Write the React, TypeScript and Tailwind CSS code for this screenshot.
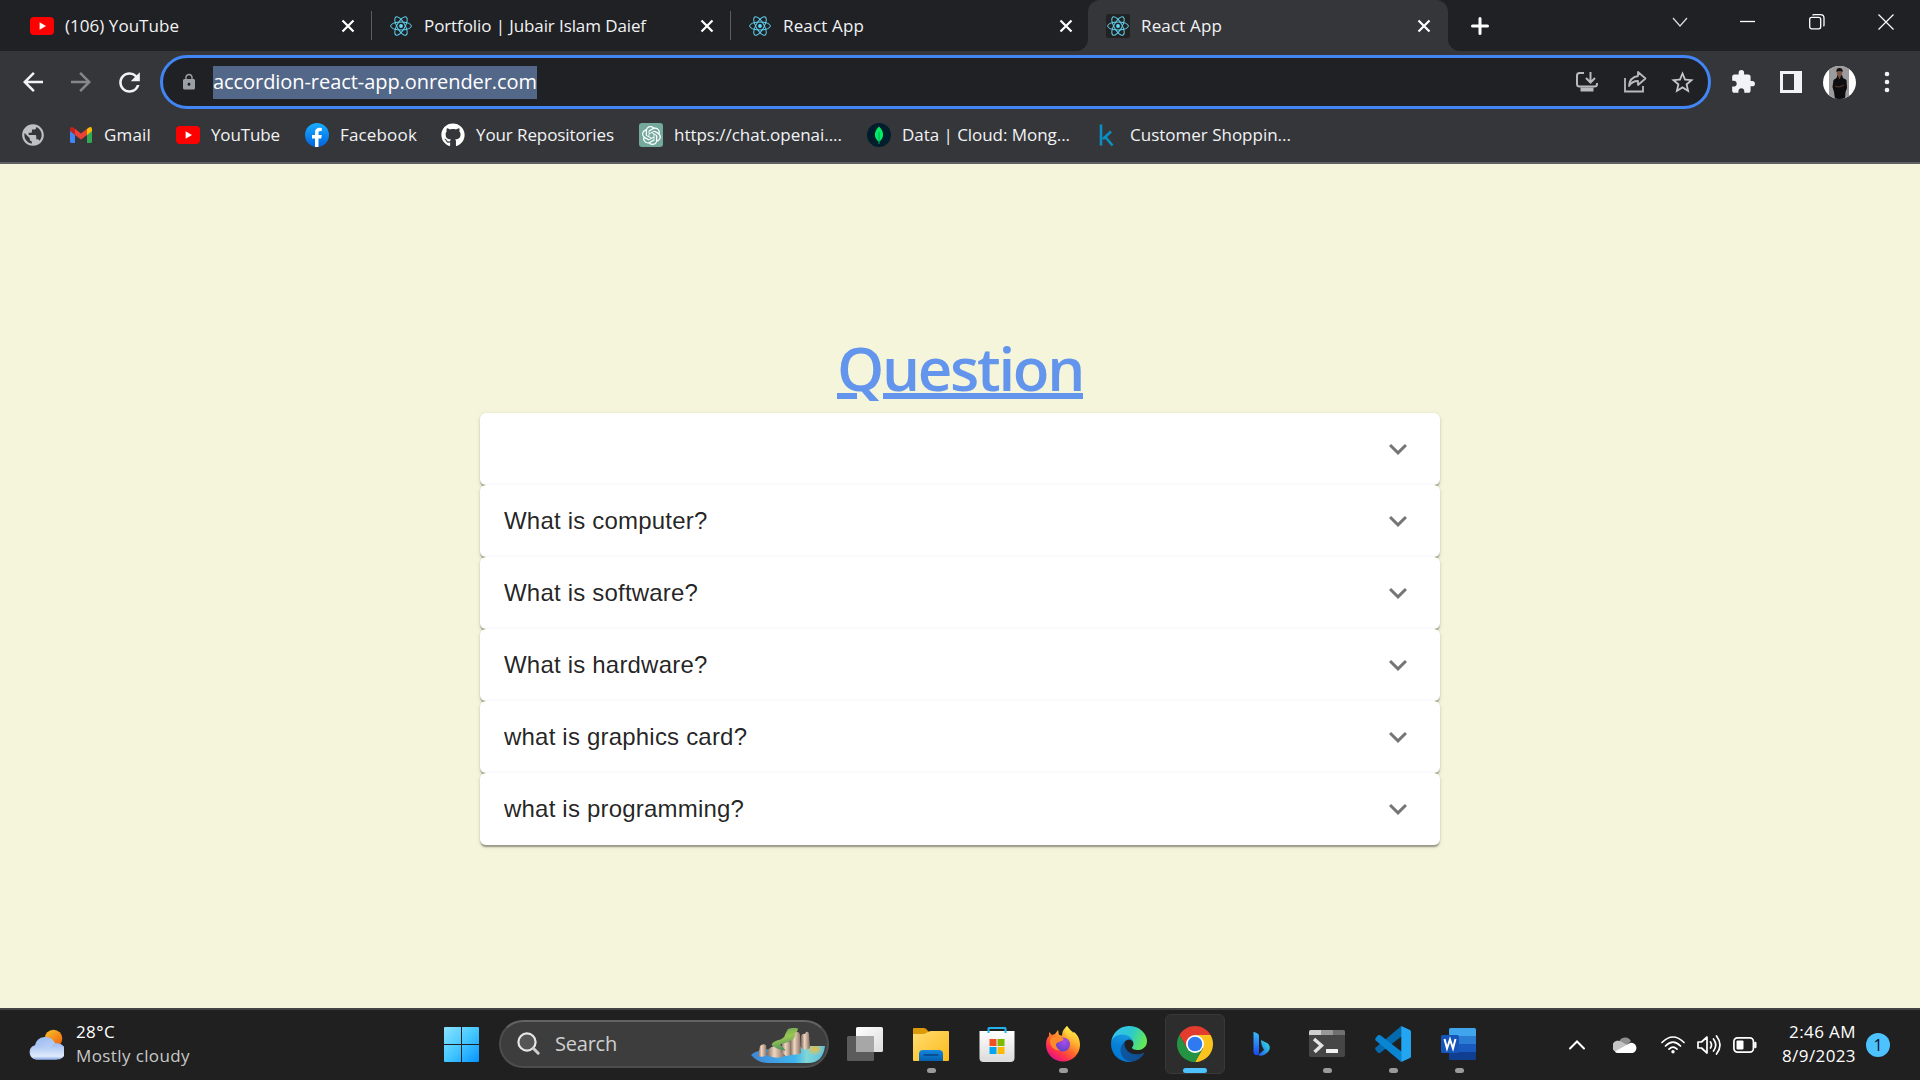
import { useLayoutEffect, useRef, type ReactNode } from "react";
import { FaGithub } from "react-icons/fa";
import { SiOpenai } from "react-icons/si";
import { MdLock, MdArrowBack, MdArrowForward, MdRefresh, MdExtension, MdStarBorder, MdPublic } from "react-icons/md";

/* Single-line label whose letter spacing is tuned so that it fills `w` pixels. */
function Label({ w, className = "", children }: { w: number; className?: string; children: string }) {
  const ref = useRef<HTMLSpanElement>(null);
  useLayoutEffect(() => {
    const el = ref.current;
    if (!el) return;
    el.style.letterSpacing = "0px";
    const natural = el.getBoundingClientRect().width;
    el.style.letterSpacing = `${(w - natural) / children.length}px`;
  }, [w, children]);
  return (
    <span ref={ref} className={`inline-block shrink-0 whitespace-pre ${className}`}>
      {children}
    </span>
  );
}

function YouTubeIcon() {
  return (
    <svg viewBox="0 0 24 18" className="h-[18px] w-6 shrink-0">
      <rect width="24" height="18" rx="4" fill="#f00" />
      <path d="M9.6 5.2v7.6L16 9z" fill="#fff" />
    </svg>
  );
}

function ReactIcon({ plate = false }: { plate?: boolean }) {
  return (
    <svg viewBox="0 0 24 24" className="size-6 shrink-0" fill="none" stroke="#5fd4f3" strokeWidth="1">
      {plate && <rect width="24" height="24" rx="2" fill="#222" stroke="none" />}
      <ellipse cx="12" cy="12" rx="10.4" ry="4" />
      <ellipse cx="12" cy="12" rx="10.4" ry="4" transform="rotate(60 12 12)" />
      <ellipse cx="12" cy="12" rx="10.4" ry="4" transform="rotate(120 12 12)" />
      <circle cx="12" cy="12" r="1.9" fill="#61dafb" stroke="none" />
    </svg>
  );
}

function CloseX() {
  return (
    <svg viewBox="0 0 14 14" className="size-3.5 shrink-0" stroke="#fff" strokeWidth="2.2">
      <path d="M1.5 1.5l11 11M12.5 1.5l-11 11" />
    </svg>
  );
}

function Tab({ title, w, icon, separator = true }: { title: string; w: number; icon: ReactNode; separator?: boolean }) {
  return (
    <div className="flex h-[51px] w-[359px] shrink-0 items-center pl-[17px]">
      {icon}
      <Label w={w} className="ml-[11px] text-[17px] text-[#f1f3f4]">
        {title}
      </Label>
      <span className="ml-auto mr-4 flex">
        <CloseX />
      </span>
      <span className={separator ? "h-[29px] w-px bg-[#5a5c60]" : "h-[29px] w-px"} />
    </div>
  );
}

function TabStrip() {
  return (
    <div className="flex h-[51px] bg-[#202124] pl-[13px]">
      <Tab title="(106) YouTube" w={114} icon={<YouTubeIcon />} />
      <Tab title="Portfolio | Jubair Islam Daief" w={222} icon={<ReactIcon />} />
      <Tab title="React App" w={81} icon={<ReactIcon />} separator={false} />
      <div className="relative -ml-0.5 w-[360px] rounded-t-[12px] bg-[#35363a] pl-px">
        <svg viewBox="0 0 12 12" className="absolute bottom-0 -left-3 size-3" fill="#35363a">
          <path d="M12 0v12H0A12 12 0 0 0 12 0z" />
        </svg>
        <svg viewBox="0 0 12 12" className="absolute bottom-0 -right-3 size-3" fill="#35363a">
          <path d="M0 0v12h12A12 12 0 0 1 0 0z" />
        </svg>
        <Tab title="React App" w={81} icon={<ReactIcon plate />} separator={false} />
      </div>
      <svg viewBox="0 0 18 18" className="mt-[17px] ml-[23px] size-[18px]" stroke="#fff" strokeWidth="3" strokeLinecap="round">
        <path d="M9 1.5v15M1.5 9h15" />
      </svg>
      <div className="ml-auto flex pt-[14px] pr-[26px]">
        <svg viewBox="0 0 16 16" className="mr-[52px] size-4" fill="none" stroke="#ddd" strokeWidth="1.2">
          <path d="M1 4l7 8 7-8" />
        </svg>
        <svg viewBox="0 0 16 16" className="mr-[53px] size-4" stroke="#fff" strokeWidth="1.3">
          <path d="M0 7.5h15" />
        </svg>
        <svg viewBox="0 0 16 16" className="mr-[53px] size-4" fill="none" stroke="#fff" strokeWidth="1.3">
          <rect x=".7" y="3.4" width="11" height="11.4" rx="2" />
          <path d="M3.5 1.2Q4 .7 5 .7h6.500q3.500 0 3.500 3.500V11q0 .8-.5 1.300" />
        </svg>
        <svg viewBox="0 0 16 16" className="size-4" stroke="#fff" strokeWidth="1.2">
          <path d="M.5.5l15 15M15.500.5l-15 15" />
        </svg>
      </div>
    </div>
  );
}

function Avatar() {
  return (
    <svg viewBox="0 0 33 33" className="size-[33px] shrink-0">
      <defs>
        <clipPath id="avatarClip">
          <circle cx="16.5" cy="16.5" r="16.500" />
        </clipPath>
      </defs>
      <g clipPath="url(#avatarClip)">
        <rect width="33" height="33" fill="#fff" />
        <rect x="6" width="20" height="33" fill="#9b9b9d" />
        <path d="M14.500 9h4.500l1 3 3.500 2 .5 8-1.500 4-.5 7H12l-1-7-1.500-5L10.500 14l3-2z" fill="#0d0d10" />
        <ellipse cx="16.500" cy="6.500" rx="2.700" ry="3.800" fill="#7d5648" />
        <path d="M13.400 6Q13 2 16.500 2t3.200 4q-3-2-6.300 0z" fill="#111" />
        <path d="M14.800 10h3.200l-1.500 3.500z" fill="#76503f" />
        <path d="M12 20q4 2 9-1" stroke="#4a332b" strokeWidth="1.200" fill="none" />
      </g>
    </svg>
  );
}

function Toolbar() {
  return (
    <div className="flex h-[62px] items-center bg-[#35363a]">
      <MdArrowBack className="ml-[18px] size-[30px] shrink-0 text-[#f1f3f4]" />
      <MdArrowForward className="ml-[18px] size-[30px] shrink-0 text-[#86878a]" />
      <MdRefresh className="ml-[18px] size-[31px] shrink-0 text-[#f1f3f4]" />
      <div className="ml-[15px] flex h-[54px] w-[1551px] shrink-0 items-center rounded-full border-[3px] border-[#4285f4] bg-[#202124]">
        <MdLock className="ml-[17px] size-[18px] shrink-0 text-[#9aa0a6]" />
        <span className="ml-[15px] flex h-[33px] items-center bg-[#536788]">
          <Label w={324} className="text-[20px] text-white">
            accordion-react-app.onrender.com
          </Label>
        </span>
        <svg viewBox="0 0 22 22" className="ml-auto size-[22px]" fill="none" stroke="#b8babd" strokeWidth="2">
          <path d="M8 2H3.500Q1 2 1 4.500V13q0 2.500 2.500 2.500h15Q21 15.500 21 13v-1" />
          <path d="M14.500 1v9.500M10 7l4.500 4.500L19 7" />
          <path d="M4.500 18.500h13" strokeWidth="4" />
        </svg>
        <svg viewBox="0 0 24 24" className="ml-[25px] size-6" fill="none" stroke="#b8babd" strokeWidth="1.800">
          <path d="M2 8v13.500h18V16" />
          <path d="M15 2l7.500 6.500L15 15v-4q-5.500-.2-9 5Q6.500 7.500 15 6z" strokeLinejoin="round" />
        </svg>
        <MdStarBorder className="mr-3 ml-[22px] size-[27px] text-[#c4c6c9]" />
      </div>
      <MdExtension className="ml-[19px] size-[26px] shrink-0 text-[#f1f3f4]" />
      <svg viewBox="0 0 22 22" className="ml-6 size-[22px] shrink-0">
        <path d="M0 0h22v22H0zM3 3v16h11V3z" fill="#f1f3f4" fillRule="evenodd" />
      </svg>
      <span className="ml-[21px] flex">
        <Avatar />
      </span>
      <svg viewBox="0 0 6 22" className="ml-7 h-[22px] w-1.5 shrink-0" fill="#f1f3f4">
        <circle cx="3" cy="3" r="2.300" />
        <circle cx="3" cy="11" r="2.300" />
        <circle cx="3" cy="19" r="2.300" />
      </svg>
    </div>
  );
}

function Bookmark({ icon, title, w, className }: { icon: ReactNode; title: string; w: number; className: string }) {
  return (
    <div className={`flex items-center ${className}`}>
      {icon}
      <Label w={w} className="ml-[11px] text-[17px] text-[#f1f3f4]">
        {title}
      </Label>
    </div>
  );
}

function BookmarksBar() {
  return (
    <div className="flex h-[51px] items-center border-b-2 border-[#5f6063] bg-[#35363a] pb-[5px] pl-5">
      <MdPublic className="size-[26px] shrink-0 text-[#bdc1c6]" />
      <Bookmark
        className="ml-[23px]"
        w={47}
        title="Gmail"
        icon={
          <svg viewBox="0 0 24 18" className="h-[18px] w-6">
            <path d="M1 3v12.500Q1 17 2.500 17H6V8z" fill="#4285f4" />
            <path d="M23 3v12.500q0 1.500-1.500 1.500H18V8z" fill="#34a853" />
            <path d="M18 3l1.500-1.200Q23-.2 23 3.500V5l-5 4z" fill="#fbbc04" />
            <path d="M6 3L4.500 1.800Q1-.2 1 3.500V5l5 4z" fill="#c5221f" />
            <path d="M6 2.800l6 4.700 6-4.700V9l-6 4.600L6 9z" fill="#ea4335" />
          </svg>
        }
      />
      <Bookmark className="ml-[25px]" w={69} title="YouTube" icon={<YouTubeIcon />} />
      <Bookmark
        className="ml-[25px]"
        w={77}
        title="Facebook"
        icon={
          <svg viewBox="0 0 24 24" className="size-6">
            <defs>
              <linearGradient id="fb" x2="0" y2="1">
                <stop stopColor="#19aeff" />
                <stop offset="1" stopColor="#0163e0" />
              </linearGradient>
            </defs>
            <circle cx="12" cy="12" r="12" fill="url(#fb)" />
            <path d="M10 24v-8.500H7V12h3V9.300C10 6.300 11.800 4.700 14.500 4.700q1.300 0 2.300.2V8h-1.500c-1.500 0-1.800.8-1.800 1.800V12h3.300l-.6 3.500h-2.700V24z" fill="#fff" />
          </svg>
        }
      />
      <Bookmark className="ml-6" w={138} title="Your Repositories" icon={<FaGithub className="size-6 text-white" />} />
      <Bookmark
        className="ml-[25px]"
        w={168}
        title="https://chat.openai...."
        icon={
          <span className="flex size-6 items-center justify-center rounded-[3px] bg-[#74aa9c]">
            <SiOpenai className="size-[19px] text-white" />
          </span>
        }
      />
      <Bookmark
        className="ml-[25px]"
        w={168}
        title="Data | Cloud: Mong..."
        icon={
          <svg viewBox="0 0 24 24" className="size-6">
            <circle cx="12" cy="12" r="12" fill="#001e2b" />
            <path d="M12 3.500c5.500 5.500 5.500 11 0 15.500-5.500-4.500-5.500-10 0-15.500z" fill="#00ed64" />
            <path d="M12 9v12" stroke="#00a85a" />
          </svg>
        }
      />
      <Bookmark
        className="ml-[25px]"
        w={161}
        title="Customer Shoppin..."
        icon={
          <svg viewBox="0 0 24 24" className="size-6" fill="none" stroke="#0a8fc4" strokeWidth="2.600">
            <path d="M6 1.500v21M16 8.500l-8 7.500M10 13.500l7.500 9" />
          </svg>
        }
      />
    </div>
  );
}

const questions = ["", "What is computer?", "What is software?", "What is hardware?", "what is graphics card?", "what is programming?"];

function QuestionPage() {
  return (
    <main className="flex h-[844px] flex-col items-center bg-[#f5f5dc] pt-[162px]">
      <h1 className="mb-[3px] flex h-[84px] items-center text-[#6495ed]">
        <Label
          w={246}
          className="text-[60px] leading-[84px] font-semibold underline decoration-[6px] underline-offset-[2px]"
        >
          Question
        </Label>
      </h1>
      <div className="w-[960px]">
        {questions.map((q) => (
          <div
            key={q}
            className="flex h-[72px] items-center justify-between rounded-[6px] bg-white px-6 text-black/87 shadow-[0_3px_1.5px_-1.5px_rgba(0,0,0,0.2),0_1.5px_1.5px_0_rgba(0,0,0,0.14),0_1.5px_4.5px_0_rgba(0,0,0,0.12)]"
          >
            <p className="font-['Liberation_Sans',Arial,sans-serif] text-[24px] leading-9 tracking-[0.2px]">{q}</p>
            <svg viewBox="0 0 24 24" className="size-9 fill-black/54">
              <path d="M16.590 8.590 12 13.170 7.410 8.590 6 10l6 6 6-6z" />
            </svg>
          </div>
        ))}
      </div>
    </main>
  );
}

function TaskButton({ children, state }: { children: ReactNode; state?: "open" | "active" }) {
  return (
    <div className="flex w-[66px] shrink-0 justify-center pt-1">
      <div
        className={
          state === "active"
            ? "flex h-[60px] w-[60px] flex-col items-center rounded-[6px] border border-[#383838] bg-[#2d2d2d] pt-[11px]"
            : "flex h-[60px] w-[60px] flex-col items-center pt-3"
        }
      >
        {children}
        {state === "open" && <span className="mt-1.5 h-[5px] w-[9px] rounded-full bg-[#9a9a9a]" />}
        {state === "active" && <span className="mt-1.5 h-[5px] w-6 rounded-full bg-[#4cc2ff]" />}
      </div>
    </div>
  );
}

function IslandArt() {
  return (
    <svg viewBox="0 0 74 36" className="h-9 w-[74px]">
      <defs>
        <linearGradient id="sea">
          <stop stopColor="#3f86d8" />
          <stop offset=".6" stopColor="#3fb5ec" />
          <stop offset=".75" stopColor="#7fd6d6" />
          <stop offset="1" stopColor="#58bfe0" />
        </linearGradient>
        <radialGradient id="sand">
          <stop stopColor="#f0b93a" />
          <stop offset="1" stopColor="#f0c95a" stopOpacity="0" />
        </radialGradient>
        <linearGradient id="rock">
          <stop stopColor="#7c675b" />
          <stop offset=".4" stopColor="#efd6c0" />
          <stop offset="1" stopColor="#846c60" />
        </linearGradient>
        <linearGradient id="grass" x2=".3" y2="1">
          <stop stopColor="#5d9a5a" />
          <stop offset=".5" stopColor="#9bc653" />
          <stop offset="1" stopColor="#4f9160" />
        </linearGradient>
        <clipPath id="seaClip">
          <path d="M0 27q5-5 20-6l25-1 8-2h21q-2 17-17 17H17Q7 35 0 27z" />
        </clipPath>
      </defs>
      <g clipPath="url(#seaClip)">
        <rect width="74" height="36" fill="url(#sea)" />
        <ellipse cx="64" cy="21" rx="9" ry="7" fill="url(#sand)" />
      </g>
      <path d="M7 28l2-10q3-3 6-1l1 10q-4 3-9 1z" fill="url(#rock)" />
      <path d="M16 27q0-8 8-9l10 4v6q-9 4-18-1z" fill="url(#rock)" />
      <path d="M30 24l1-8 5-3 5 1v13l-6 1z" fill="url(#rock)" />
      <path d="M39 26V10l5-6q4-1 5 3l1 18q-5 3-11 1z" fill="url(#rock)" />
      <path d="M50 20V8q1-3 4-2l1-2q3-1 3 3l1 13q-4 3-9 0z" fill="url(#rock)" />
      <path d="M37 1q5-2 10-.5 0 3-3 5 1 4-4 7-6 3-11 4l6 6q-7 0-14-5-1-3 5-5 8-2 8-6z" fill="url(#grass)" />
    </svg>
  );
}

function TaskIcons() {
  return (
    <>
      <TaskButton>
        <svg viewBox="0 0 36 36" className="size-9">
          <defs>
            <linearGradient id="tv" x2="1" y2="1">
              <stop stopColor="#fff" />
              <stop offset="1" stopColor="#dcdcdc" />
            </linearGradient>
          </defs>
          <rect x="9" y="1" width="27" height="25" rx="1.500" fill="url(#tv)" />
          <rect x="0" y="10" width="27" height="25" rx="1.500" fill="#5b5b5b" />
          <rect x="9" y="10" width="18" height="16" fill="#a7a7a7" />
        </svg>
      </TaskButton>
      <TaskButton state="open">
        <svg viewBox="0 0 36 36" className="size-9">
          <defs>
            <linearGradient id="fold" x2="1" y2="1">
              <stop stopColor="#ffdc72" />
              <stop offset="1" stopColor="#fdbb1a" />
            </linearGradient>
            <linearGradient id="foldBlue" x2="0" y2="1">
              <stop stopColor="#1487de" />
              <stop offset="1" stopColor="#0560b0" />
            </linearGradient>
          </defs>
          <path d="M0 3q0-1 1-1h10q2 0 4 3l2 2-4 4H0z" fill="#dc9a07" />
          <path d="M0 8h9q3 0 5-1.500T18 5h17q1 0 1 1v28q0 1-1 1H1q-1 0-1-1z" fill="url(#fold)" />
          <path d="M6 35V28q0-4 4-4h16q4 0 4 4v7z" fill="url(#foldBlue)" />
          <path d="M11.500 29h13" stroke="#084f94" strokeWidth="2" strokeLinecap="round" />
        </svg>
      </TaskButton>
      <TaskButton>
        <svg viewBox="0 0 36 36" className="size-9">
          <defs>
            <linearGradient id="bag" x2="0" y2="1">
              <stop stopColor="#fff" />
              <stop offset="1" stopColor="#dadada" />
            </linearGradient>
          </defs>
          <path d="M9.500 8V2.500q0-.5.500-.500h16q.5 0 .5.500V8" fill="none" stroke="#22b3ee" strokeWidth="2" />
          <path d="M.5 5H35.500V32q0 4-4 4H4.500q-4 0-4-4z" fill="url(#bag)" />
          <path d="M9.500 7V5M26.500 7V5" stroke="#22b3ee" strokeWidth="2" />
          <path d="M10.500 13h7v7h-7z" fill="#f25022" />
          <path d="M18.500 13h7v7h-7z" fill="#7fba00" />
          <path d="M10.500 21h7v7h-7z" fill="#00a4ef" />
          <path d="M18.500 21h7v7h-7z" fill="#ffb900" />
        </svg>
      </TaskButton>
      <TaskButton state="open">
        <svg viewBox="0 0 36 36" className="size-9">
          <defs>
            <linearGradient id="fox" x1=".85" y1=".1" x2=".25" y2=".95">
              <stop stopColor="#fff04a" />
              <stop offset=".3" stopColor="#ffb02e" />
              <stop offset=".55" stopColor="#ff6a2b" />
              <stop offset=".8" stopColor="#ff2f4f" />
              <stop offset="1" stopColor="#e01587" />
            </linearGradient>
            <radialGradient id="foxGlobe" cx=".6" cy=".3" r=".8">
              <stop stopColor="#a94ee8" />
              <stop offset="1" stopColor="#5a3fc8" />
            </radialGradient>
            <linearGradient id="foxTail" x2="0" y2="1">
              <stop stopColor="#fff04a" />
              <stop offset="1" stopColor="#ffa62e" stopOpacity="0" />
            </linearGradient>
          </defs>
          <path d="M22 0c1 3 3 4 6 7l1-1c5 4 6 9 6 13A17 16.500 0 0 1 1 19c0-5 1-7 3-9l0-4 3 3 3-1 3-4 1 5q2 0 3 1 0-6 5-10z" fill="url(#fox)" />
          <circle cx="18" cy="18.500" r="7" fill="url(#foxGlobe)" />
          <path d="M5.500 12q4-2 8.500-1 5 .5 4.500 3l-4.500 2q-4 1-3 4 1 3 4 4-4 1-7-2-4-4-2.500-10z" fill="#ff8a2a" />
          <path d="M22 0q-4 7 .5 11 5 4 2.500 12 6-4 6-12 0-3-3-5-3-2-6-6z" fill="url(#foxTail)" />
        </svg>
      </TaskButton>
      <TaskButton>
        <svg viewBox="0 0 256 256" className="size-9">
          <defs>
            <linearGradient id="edgeA" x1="0" x2="1">
              <stop stopColor="#0c59a4" />
              <stop offset="1" stopColor="#114a8b" />
            </linearGradient>
            <linearGradient id="edgeB" x1=".6" y1="0" x2=".3" y2="1">
              <stop stopColor="#1b9de2" />
              <stop offset=".5" stopColor="#0680d7" />
              <stop offset="1" stopColor="#0078d4" />
            </linearGradient>
            <linearGradient id="edgeC" x1="0" y1=".3" x2="1" y2=".6">
              <stop stopColor="#35c1f1" />
              <stop offset=".5" stopColor="#2cc9cf" />
              <stop offset="1" stopColor="#66eb4e" />
            </linearGradient>
          </defs>
          <g transform="translate(-4.630 -4.920)">
            <path fill="url(#edgeA)" d="M235.680 195.460a93.730 93.730 0 0 1-10.540 4.710 101.870 101.870 0 0 1-35.900 6.460c-47.320 0-88.540-32.550-88.540-74.320A31.480 31.480 0 0 1 117.130 105c-42.800 1.800-53.800 46.400-53.800 72.530 0 73.880 68.090 81.370 82.760 81.370 7.910 0 19.840-2.300 27-4.560l1.310-.44a128.340 128.340 0 0 0 66.600-52.800 4 4 0 0 0-5.320-5.640z" />
            <path fill="url(#edgeB)" d="M110.340 246.340A79.200 79.200 0 0 1 87.600 225a80.720 80.720 0 0 1 29.530-120c3.120-1.470 8.450-4.130 15.540-4a32.350 32.350 0 0 1 25.690 13 31.880 31.880 0 0 1 6.360 18.660c0-.21 24.460-79.600-80-79.600-43.900 0-80 41.660-80 78.210a130.150 130.150 0 0 0 12.110 56 128 128 0 0 0 156.380 67.110 75.550 75.550 0 0 1-62.780-8z" />
            <path fill="url(#edgeC)" d="M156.940 153.780c-.81 1.050-3.300 2.500-3.300 5.660 0 2.610 1.700 5.120 4.720 7.230 14.380 10 41.490 8.680 41.560 8.680a59.560 59.560 0 0 0 30.270-8.350A61.380 61.380 0 0 0 260.630 114c.26-22.410-8-37.310-11.340-43.910-21.190-41.450-66.930-65.290-116.670-65.290a128 128 0 0 0-128 126.200c.48-36.540 36.800-66.050 80-66.050 3.500 0 23.460.34 42 10.070 16.340 8.580 24.900 18.940 30.850 29.210 6.180 10.670 7.280 24.150 7.280 29.520s-2.740 13.330-7.810 20.030z" />
          </g>
        </svg>
      </TaskButton>
      <TaskButton state="active">
        <svg viewBox="0 0 48 48" className="size-9">
          <path d="M3.220 12A24 24 0 0 1 44.780 12H24L13.610 30z" fill="#e33b2e" />
          <path d="M44.780 12A24 24 0 0 1 24 48L34.390 30 24 12z" fill="#fcc31e" />
          <path d="M3.220 12A24 24 0 0 0 24 48L34.390 30H13.610z" fill="#249444" />
          <circle cx="24" cy="24" r="12" fill="#fff" />
          <circle cx="24" cy="24" r="9.700" fill="#2f7af0" />
        </svg>
      </TaskButton>
      <TaskButton>
        <svg viewBox="0 0 36 36" className="size-9">
          <defs>
            <linearGradient id="bingA" x2="0" y2="1">
              <stop stopColor="#37bdfa" />
              <stop offset="1" stopColor="#1b48ef" />
            </linearGradient>
            <linearGradient id="bingB" x1="0" y1="1" x2="1" y2="0">
              <stop stopColor="#2156f0" />
              <stop offset="1" stopColor="#35e8e0" />
            </linearGradient>
          </defs>
          <path d="M18 14l6 3c3.500 2 3.500 6.500 1 9-3.500 3.500-7 4.500-10 3l6-5-2-4q-1-2.500-1-6z" fill="url(#bingB)" />
          <path d="M10.500 6.500q-.3-1 .8-.6l3.200 1.600q1.500.7 1.500 2.500V26q0 3-2 3.200-3.500-.2-3.500-4z" fill="url(#bingA)" />
        </svg>
      </TaskButton>
      <TaskButton state="open">
        <svg viewBox="0 0 36 36" className="size-9">
          <rect y="4" width="36" height="27" rx="2" fill="#464646" />
          <path d="M0 9V6q0-2 2-2h10v5z" fill="#d0d0d0" />
          <path d="M12 4h12v5H12z" fill="#999" />
          <path d="M24 4h10q2 0 2 2v3H24z" fill="#707070" />
          <path d="M5 13l7.500 6.500L5.500 26" fill="none" stroke="#e4e4e4" strokeWidth="3.400" />
          <rect x="17" y="23" width="12" height="4" rx=".5" fill="#f2f2f2" />
        </svg>
      </TaskButton>
      <TaskButton state="open">
        <svg viewBox="0 0 100 100" className="size-9">
          <path d="M73 0L2 60q-3 3 0 7l6 7q3 2 7 0l60-46z" fill="#0469ad" />
          <path d="M73 100L2 40q-3-3 0-7l6-7q3-2 7 0l60 46z" fill="#0a85d2" />
          <path d="M73 0l24 11q3 2 3 5v68q0 3-3 5l-24 11z" fill="#23a6f2" />
        </svg>
      </TaskButton>
      <TaskButton state="open">
        <svg viewBox="0 0 36 36" className="size-9">
          <path d="M8 3.500Q8 2 9.500 2h24Q35 2 35 3.500V10H8z" fill="#41a5ee" />
          <path d="M8 10h27v8H8z" fill="#2b7cd3" />
          <path d="M8 18h27v8H8z" fill="#185abd" />
          <path d="M8 26h27v6.500q0 1.500-1.500 1.500h-24Q8 34 8 32.500z" fill="#103f91" />
          <rect x="0" y="9" width="18" height="18" rx="1.500" fill="#1554b8" />
          <path d="M3.500 13l2.500 9.500 3-9 3 9 2.500-9.500" fill="none" stroke="#fff" strokeWidth="2" />
        </svg>
      </TaskButton>
    </>
  );
}

function Tray() {
  return (
    <div className="ml-auto flex items-center pr-[30px]">
      <svg viewBox="0 0 18 12" className="h-3 w-[18px]" fill="none" stroke="#fff" strokeWidth="2" strokeLinecap="round">
        <path d="M2 9.500l7-7 7 7" />
      </svg>
      <svg viewBox="0 0 24 16" className="ml-[27px] h-4 w-6">
        <path d="M6 5a6.500 6.500 0 0 1 12-1l-6 6z" fill="#8f8f8f" />
        <path d="M2 14.500A5.600 5.600 0 0 1 8 4.500l9 5-14 6z" fill="#c4c4c4" />
        <path d="M2 14.500L17 6a5 5 0 0 1 2.500 10H5q-2 0-3-1.500z" fill="#fff" />
      </svg>
      <svg viewBox="0 0 24 20" className="ml-6 h-5 w-6" fill="none" stroke="#fff" strokeWidth="1.700" strokeLinecap="round">
        <path d="M1 7.500q11-11 22 0M4.500 11q7.500-7.500 15 0M8 14.200q4-4 8 0" />
        <circle cx="12" cy="16.800" r="1.700" fill="#fff" stroke="none" />
      </svg>
      <svg viewBox="0 0 24 22" className="ml-3 h-[22px] w-6" fill="none" stroke="#fff" strokeWidth="1.700" strokeLinecap="round" strokeLinejoin="round">
        <path d="M1 8v6h3.500l5.500 5V3L4.500 8z" />
        <path d="M13.500 8q2 3 0 6M16.500 5q4.500 6 0 12M19.500 2q7 9 0 18" />
      </svg>
      <svg viewBox="0 0 24 16" className="ml-3 h-4 w-6" fill="none" stroke="#fff" strokeWidth="1.700">
        <rect x=".9" y=".9" width="19.500" height="14.200" rx="3.500" />
        <rect x="3.500" y="3.500" width="7" height="9" rx="1" fill="#fff" stroke="none" />
        <path d="M22.300 6v4" strokeWidth="2.400" strokeLinecap="round" />
      </svg>
      <div className="mr-2.5 ml-[25px] flex w-[74px] flex-col items-end pb-0.5 text-[17px] leading-6 text-white">
        <Label w={67}>2:46 AM</Label>
        <Label w={74}>8/9/2023</Label>
      </div>
      <span className="flex size-6 items-center justify-center rounded-full bg-[#4cc2ff] text-[16px] text-[#111]">1</span>
    </div>
  );
}

function Taskbar() {
  return (
    <footer className="flex h-[72px] border-t-2 border-[#434343] bg-[#202020]">
      <div className="flex w-[432px] items-center pl-7">
        <svg viewBox="0 0 36 32" className="h-8 w-9">
          <defs>
            <linearGradient id="sun" x2=".7" y2="1">
              <stop stopColor="#f9c42c" />
              <stop offset="1" stopColor="#f0640f" />
            </linearGradient>
            <linearGradient id="cloud" x2="0" y2="1">
              <stop stopColor="#9dbcf3" />
              <stop offset=".8" stopColor="#e0ebfa" />
              <stop offset="1" stopColor="#7fa4ea" />
            </linearGradient>
            <linearGradient id="cloudBack" x2=".4" y2="1">
              <stop stopColor="#94b6f2" />
              <stop offset="1" stopColor="#d4e1f8" />
            </linearGradient>
          </defs>
          <circle cx="25.500" cy="9.500" r="8.800" fill="url(#sun)" />
          <path d="M8 30.500a7.300 7.300 0 0 1-1-14.300A10.600 10.600 0 0 1 27 14.200a8.200 8.200 0 0 1 1 16.300z" fill="url(#cloudBack)" />
          <path d="M8 30.500a7.300 7.300 0 1 1 8-11q4 0 5 2a8.200 8.200 0 1 1 7 9z" fill="url(#cloud)" />
        </svg>
        <div className="ml-3 flex flex-col pb-0.5 text-[17px] leading-6">
          <Label w={39} className="self-start text-white">28°C</Label>
          <Label w={114} className="self-start text-[#c8c8c8]">Mostly cloudy</Label>
        </div>
      </div>
      <svg viewBox="0 0 35 35" className="mt-[17px] ml-3 size-[35px] shrink-0">
        <defs>
          <linearGradient id="win" x2="1" y2="1">
            <stop stopColor="#8be3ff" />
            <stop offset=".5" stopColor="#45c8ff" />
            <stop offset="1" stopColor="#0693ff" />
          </linearGradient>
        </defs>
        <path d="M1 0h16v17H0V1q0-1 1-1zM18 0h16q1 0 1 1v16H18zM0 18h17v17H1q-1 0-1-1zM18 18h17v16q0 1-1 1H18z" fill="url(#win)" />
      </svg>
      <div className="mt-2.5 mr-[3px] ml-5 flex h-12 w-[330px] shrink-0 items-center rounded-full border-2 border-[#4d4d4d] border-t-[#636363] bg-[#3d3d3d]">
        <svg viewBox="0 0 24 24" className="ml-4 size-6" fill="none" strokeLinecap="round">
          <circle cx="10" cy="10" r="8.600" fill="#555" stroke="#e6e6e6" strokeWidth="2.200" />
          <path d="M16.500 16.500l4.700 4.700" stroke="#cfcfcf" strokeWidth="3" />
        </svg>
        <Label w={62} className="ml-3.5 text-[20px] text-[#d0d0d0]">
          Search
        </Label>
        <span className="mr-0.5 ml-auto flex pt-1">
          <IslandArt />
        </span>
      </div>
      <TaskIcons />
      <Tray />
    </footer>
  );
}

export default function App() {
  return (
    <div className="flex h-[1080px] w-[1920px] flex-col overflow-hidden font-['Open_Sans','Noto_Sans',sans-serif]">
      <TabStrip />
      <Toolbar />
      <BookmarksBar />
      <QuestionPage />
      <Taskbar />
    </div>
  );
}
